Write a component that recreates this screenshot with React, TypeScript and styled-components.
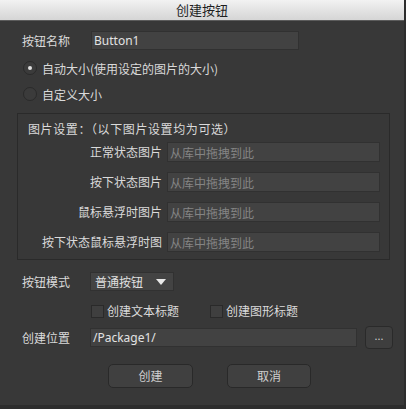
import React from "react";
import styled, { createGlobalStyle } from "styled-components";

const Global = createGlobalStyle`
  html, body { margin: 0; padding: 0; background: #2d2d2d; }
  body { font-family: "Noto Sans CJK SC", "Noto Sans", sans-serif; font-size: 12px; }
  * { box-sizing: border-box; }
`;

const Window = styled.div`
  width: 404px;
  height: 405px;
  background: #383838;
  display: flex;
  flex-direction: column;
  overflow: hidden;
`;

const TitleBar = styled.div`
  height: 21px;
  flex: none;
  background: linear-gradient(#f2f2f2, #d5d5d5);
  border-bottom: 1px solid #5c5c5c;
  display: flex;
  align-items: center;
  justify-content: center;
  color: #1e1e1e;
  font-size: 13px;
  line-height: 20px;
`;

const Body = styled.div`
  display: flex;
  flex-direction: column;
  padding-left: 17px;
  color: #dadada;
`;

const Row = styled.div<{ $mt: number; $pl?: number; $h?: number }>`
  display: flex;
  align-items: center;
  margin-top: ${(p) => p.$mt}px;
  padding-left: ${(p) => p.$pl ?? 5}px;
  height: ${(p) => (p.$h ? `${p.$h}px` : "auto")};
`;

const Label = styled.span<{ $w?: number; $right?: boolean }>`
  width: ${(p) => p.$w ?? 68}px;
  flex: none;
  line-height: 16px;
  white-space: nowrap;
  text-align: ${(p) => (p.$right ? "right" : "left")};
`;

const Field = styled.div<{ $w: number; $h?: number; $muted?: boolean }>`
  width: ${(p) => p.$w}px;
  height: ${(p) => p.$h ?? 19}px;
  background: #424242;
  border: 1px solid #313131;
  display: flex;
  align-items: center;
  padding-left: 2px;
  color: ${(p) => (p.$muted ? "#858585" : "#e2e2e2")};
  font-family: ${(p) =>
    p.$muted ? '"Noto Sans CJK SC", sans-serif' : '"Noto Sans", "Noto Sans CJK SC", sans-serif'};
  font-size: 12px;
  white-space: nowrap;
  flex: none;
`;

const Radio = styled.span<{ $on?: boolean }>`
  width: 14px;
  height: 14px;
  border-radius: 50%;
  border: 1px solid #2a2a2a;
  background: #3b3b3b;
  display: flex;
  align-items: center;
  justify-content: center;
  margin-right: 5px;
  flex: none;
  &::after {
    content: "";
    width: 4px;
    height: 4px;
    border-radius: 50%;
    background: ${(p) => (p.$on ? "#e0e0e0" : "transparent")};
  }
`;

const Group = styled.div`
  margin-top: 11px;
  width: 373px;
  height: 147px;
  border: 1px solid #2a2a2a;
  padding: 7px 9px 0 10px;
  display: flex;
  flex-direction: column;
`;

const GroupTitle = styled.div`
  line-height: 16px;
  height: 16px;
  margin-bottom: 5px;
  white-space: nowrap;
  letter-spacing: 0.6px;
`;

const ImageRows = styled.div`
  display: flex;
  flex-direction: column;
  gap: 10px;
`;

const ImageRow = styled.div`
  display: flex;
  align-items: center;
  justify-content: flex-end;
  gap: 5px;
`;

const Select = styled.div`
  width: 84px;
  height: 19px;
  background: #434343;
  border: 1px solid #313131;
  display: flex;
  align-items: center;
  justify-content: space-between;
  padding: 0 7px 0 4px;
  color: #e0e0e0;
`;

const Caret = styled.span`
  width: 0;
  height: 0;
  border-left: 5px solid transparent;
  border-right: 5px solid transparent;
  border-top: 6px solid #e8e8e8;
`;

const Check = styled.span`
  width: 13px;
  height: 13px;
  background: #3f3f3f;
  border: 1px solid #2a2a2a;
  margin-right: 3px;
  flex: none;
`;

const CheckItem = styled.label<{ $w: number }>`
  display: flex;
  align-items: center;
  width: ${(p) => p.$w}px;
  line-height: 16px;
  white-space: nowrap;
`;

const SmallButton = styled.div`
  width: 28px;
  height: 23px;
  margin-left: 8px;
  border-radius: 4px;
  background: #3e3e3e;
  border: 1px solid #2a2a2a;
  display: flex;
  align-items: center;
  justify-content: center;
  color: #d0d0d0;
  font-family: "Noto Sans", sans-serif;
  font-size: 11px;
  line-height: 10px;
  padding-bottom: 3px;
`;

const Buttons = styled.div`
  display: flex;
  gap: 34px;
  margin-top: 15px;
  padding-left: 91px;
`;

const Button = styled.div<{ $w: number }>`
  width: ${(p) => p.$w}px;
  height: 24px;
  border-radius: 5px;
  background: #404040;
  border: 1px solid #292929;
  display: flex;
  align-items: center;
  justify-content: center;
  color: #cfcfcf;
  line-height: 16px;
`;

const imageRows = ["正常状态图片", "按下状态图片", "鼠标悬浮时图片", "按下状态鼠标悬浮时图"];

export default function App() {
  return (
    <>
      <Global />
      <Window>
        <TitleBar>创建按钮</TitleBar>
        <Body>
          <Row $mt={10}>
            <Label $w={69}>按钮名称</Label>
            <Field $w={208}>Button1</Field>
          </Row>
          <Row $mt={10} $pl={6} $h={16}>
            <Radio $on />
            <span>自动大小(使用设定的图片的大小)</span>
          </Row>
          <Row $mt={10} $pl={6} $h={16}>
            <Radio />
            <span>自定义大小</span>
          </Row>
          <Group>
            <GroupTitle>图片设置：（以下图片设置均为可选）</GroupTitle>
            <ImageRows>
              {imageRows.map((t) => (
                <ImageRow key={t}>
                  <Label $w={150} $right>
                    {t}
                  </Label>
                  <Field $w={213} $h={20} $muted>
                    从库中拖拽到此
                  </Field>
                </ImageRow>
              ))}
            </ImageRows>
          </Group>
          <Row $mt={12}>
            <Label>按钮模式</Label>
            <Select>
              <span>普通按钮</span>
              <Caret />
            </Select>
          </Row>
          <Row $mt={12} $pl={74} $h={16}>
            <CheckItem $w={119}>
              <Check />
              创建文本标题
            </CheckItem>
            <CheckItem $w={120}>
              <Check />
              创建图形标题
            </CheckItem>
          </Row>
          <Row $mt={7} $h={23}>
            <Label>创建位置</Label>
            <Field $w={267}>/Package1/</Field>
            <SmallButton>...</SmallButton>
          </Row>
          <Buttons>
            <Button $w={85}>创建</Button>
            <Button $w={84}>取消</Button>
          </Buttons>
        </Body>
      </Window>
    </>
  );
}
